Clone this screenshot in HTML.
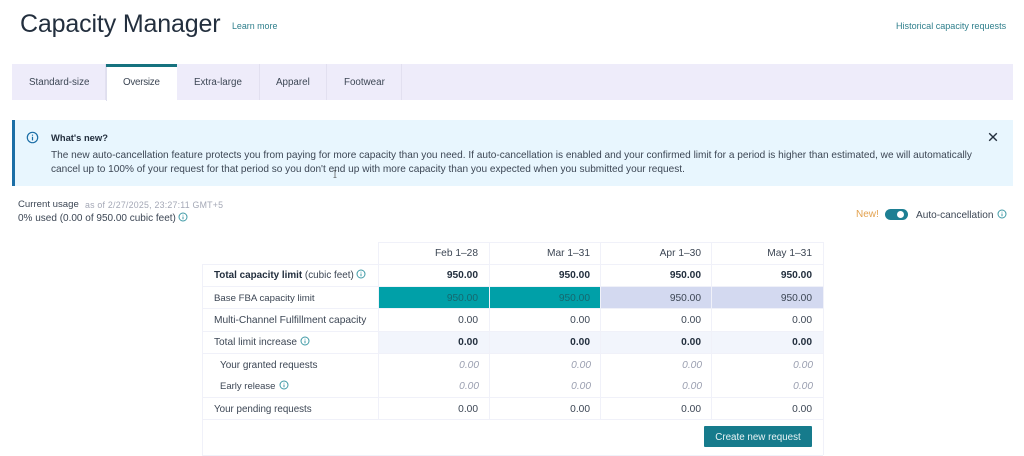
<!DOCTYPE html>
<html><head><meta charset="utf-8">
<style>
html,body{margin:0;padding:0;background:#fff;}
#p{position:relative;width:1024px;height:456px;overflow:hidden;background:#fff;font-family:"Liberation Sans",sans-serif;color:#3c4654;font-size:10.2px;}
#p div,#p svg{position:absolute;}
.t{white-space:nowrap;line-height:14px;filter:blur(.3px);}
.r{text-align:right;width:80px;}
.b{font-weight:bold;color:#232f3e;}
.i{font-style:italic;color:#9a9fb0;}
.tab{top:64px;height:36px;border-right:1px solid #e2e0f0;box-sizing:border-box;}
.tl{font-size:9.8px;}
.h{height:1px;background:#f0f1f9;left:202px;width:621px;}
.v{width:1px;background:#f0f1f9;}
</style></head><body><div id="p">

<div class="t" style="left:20px;top:9px;font-size:25px;line-height:30px;color:#232f3e;letter-spacing:-.15px;">Capacity Manager</div>
<div class="t" style="left:232px;top:19px;font-size:8.9px;color:#2f7f8c;">Learn more</div>
<div class="t" style="left:896px;top:19px;font-size:9.05px;color:#2f7f8c;">Historical capacity requests</div>

<div style="left:12px;top:64px;width:1001px;height:36px;background:#eeecfa;"></div>
<div class="tab" style="left:12px;width:94px;"></div>
<div style="left:106px;top:64px;width:71px;height:37px;background:#fff;border-left:1px solid #dfdfee;box-sizing:border-box;"></div>
<div style="left:106px;top:64px;width:71px;height:3px;background:#16727f;"></div>
<div class="tab" style="left:177px;width:83px;"></div>
<div class="tab" style="left:260px;width:67px;"></div>
<div class="tab" style="left:327px;width:75px;"></div>
<div class="t tl" style="left:29px;top:76px;">Standard-size</div>
<div class="t tl" style="left:123px;top:76px;letter-spacing:-.25px;">Oversize</div>
<div class="t tl" style="left:194px;top:76px;">Extra-large</div>
<div class="t tl" style="left:276px;top:76px;">Apparel</div>
<div class="t tl" style="left:344px;top:76px;">Footwear</div>

<div style="left:12px;top:120px;width:1001px;height:66px;background:#e8f6fe;"></div>
<div style="left:12px;top:120px;width:3px;height:66px;background:#1b6ea6;"></div>
<svg style="left:26px;top:131px" width="13" height="13" viewBox="0 0 13 13"><circle cx="6.5" cy="6.5" r="5.2" fill="none" stroke="#1b6ea6" stroke-width="1.2"/><path d="M6.5 5.800V9.400M6.500 3.600V4.700" stroke="#1b6ea6" stroke-width="1.200"/></svg>
<div class="t b" style="left:51px;top:131px;font-size:9.4px;">What's new?</div>
<div class="t" style="left:51px;top:149px;font-size:10.08px;">The new auto-cancellation feature protects you from paying for more capacity than you need. If auto-cancellation is enabled and your confirmed limit for a period is higher than estimated, we will automatically</div>
<div class="t" style="left:51px;top:163px;font-size:10.08px;">cancel up to 100% of your request for that period so you don't end up with more capacity than you expected when you submitted your request.</div>
<svg style="left:988px;top:132px" width="10" height="10" viewBox="0 0 10 10"><path d="M1.200 1.200L8.800 8.800M8.800 1.200L1.200 8.800" stroke="#232f3e" stroke-width="1.400"/></svg>
<svg style="left:333px;top:170px" width="4" height="8" viewBox="0 0 4 8"><path d="M.5.5H3.500M2 .5V7.500M.5 7.500H3.500" stroke="#333" stroke-width=".6" fill="none"/></svg>

<div class="t" style="left:18px;top:198px;font-size:9.6px;">Current usage</div>
<div class="t" style="left:85px;top:198px;font-size:8.8px;color:#a4a8b6;letter-spacing:.23px;">as of 2/27/2025, 23:27:11 GMT+5</div>
<div class="t" style="left:18px;top:212px;font-size:10px;">0% used (0.00 of 950.00 cubic feet)</div>
<svg style="left:178px;top:212px" width="10" height="10" viewBox="0 0 10 10"><circle cx="5" cy="5" r="4" fill="none" stroke="#3f9aa6"/><path d="M5 4.500V7.200M5 2.700V3.500" stroke="#3f9aa6"/></svg>

<div class="t" style="left:856px;top:208px;color:#e3a24f;font-size:10px;">New!</div>
<div style="left:885px;top:209px;width:23px;height:11px;border-radius:6px;background:#1d7f93;"></div>
<div style="left:897px;top:211px;width:7px;height:7px;border-radius:50%;background:#fff;"></div>
<div class="t" style="left:916px;top:209px;font-size:10.1px;">Auto-cancellation</div>
<svg style="left:997px;top:209px" width="10" height="10" viewBox="0 0 10 10"><circle cx="5" cy="5" r="4" fill="none" stroke="#3f9aa6"/><path d="M5 4.500V7.200M5 2.700V3.500" stroke="#3f9aa6"/></svg>

<!-- table backgrounds -->
<div style="left:378px;top:286px;width:223px;height:22px;background:#00a0a8;"></div>
<div style="left:601px;top:286px;width:222px;height:22px;background:#d3d9f0;"></div>
<div style="left:378px;top:331px;width:445px;height:22px;background:#f2f5fc;"></div>

<!-- grid -->
<div class="h" style="left:378px;width:445px;top:242px;"></div>
<div class="h" style="top:264px;"></div>
<div class="h" style="top:286px;"></div>
<div class="h" style="top:308px;"></div>
<div class="h" style="top:331px;"></div>
<div class="h" style="top:353px;"></div>
<div class="h" style="top:397px;"></div>
<div class="h" style="top:419px;"></div>
<div class="h" style="top:455px;"></div>
<div class="v" style="left:202px;top:264px;height:191px;"></div>
<div class="v" style="left:378px;top:242px;height:177px;"></div>
<div class="v" style="left:489px;top:242px;height:177px;"></div>
<div class="v" style="left:600px;top:242px;height:177px;"></div>
<div class="v" style="left:711px;top:242px;height:177px;"></div>
<div class="v" style="left:823px;top:242px;height:213px;"></div>

<!-- labels -->
<div class="t" style="left:214px;top:269px;font-size:9.9px;"><span class="b">Total capacity limit</span> (cubic feet)</div>
<svg style="left:356px;top:269px" width="10" height="10" viewBox="0 0 10 10"><circle cx="5" cy="5" r="4" fill="none" stroke="#3f9aa6"/><path d="M5 4.500V7.200M5 2.700V3.500" stroke="#3f9aa6"/></svg>
<div class="t" style="left:214px;top:292px;font-size:9.65px;">Base FBA capacity limit</div>
<div class="t" style="left:214px;top:314px;">Multi-Channel Fulfillment capacity</div>
<div class="t" style="left:214px;top:336px;font-size:10.1px;">Total limit increase</div>
<svg style="left:300px;top:336px" width="10" height="10" viewBox="0 0 10 10"><circle cx="5" cy="5" r="4" fill="none" stroke="#3f9aa6"/><path d="M5 4.500V7.200M5 2.700V3.500" stroke="#3f9aa6"/></svg>
<div class="t" style="left:220px;top:359px;font-size:9.95px;">Your granted requests</div>
<div class="t" style="left:220px;top:380px;font-size:9.5px;">Early release</div>
<svg style="left:279px;top:380px" width="10" height="10" viewBox="0 0 10 10"><circle cx="5" cy="5" r="4" fill="none" stroke="#3f9aa6"/><path d="M5 4.500V7.200M5 2.700V3.500" stroke="#3f9aa6"/></svg>
<div class="t" style="left:214px;top:403px;font-size:9.8px;">Your pending requests</div>

<!-- col 1 -->
<div class="t r" style="left:398px;top:247px;">Feb 1–28</div>
<div class="t r b" style="left:398px;top:269px;">950.00</div>
<div class="t r" style="left:398px;top:292px;color:#15686f;">950.00</div>
<div class="t r" style="left:398px;top:314px;">0.00</div>
<div class="t r b" style="left:398px;top:336px;">0.00</div>
<div class="t r i" style="left:399px;top:359px;">0.00</div>
<div class="t r i" style="left:399px;top:380px;">0.00</div>
<div class="t r" style="left:398px;top:403px;">0.00</div>
<!-- col 2 -->
<div class="t r" style="left:510px;top:247px;">Mar 1–31</div>
<div class="t r b" style="left:510px;top:269px;">950.00</div>
<div class="t r" style="left:510px;top:292px;color:#15686f;">950.00</div>
<div class="t r" style="left:510px;top:314px;">0.00</div>
<div class="t r b" style="left:510px;top:336px;">0.00</div>
<div class="t r i" style="left:511px;top:359px;">0.00</div>
<div class="t r i" style="left:511px;top:380px;">0.00</div>
<div class="t r" style="left:510px;top:403px;">0.00</div>
<!-- col 3 -->
<div class="t r" style="left:621px;top:247px;">Apr 1–30</div>
<div class="t r b" style="left:621px;top:269px;">950.00</div>
<div class="t r" style="left:621px;top:292px;">950.00</div>
<div class="t r" style="left:621px;top:314px;">0.00</div>
<div class="t r b" style="left:621px;top:336px;">0.00</div>
<div class="t r i" style="left:622px;top:359px;">0.00</div>
<div class="t r i" style="left:622px;top:380px;">0.00</div>
<div class="t r" style="left:621px;top:403px;">0.00</div>
<!-- col 4 -->
<div class="t r" style="left:732px;top:247px;">May 1–31</div>
<div class="t r b" style="left:732px;top:269px;">950.00</div>
<div class="t r" style="left:732px;top:292px;">950.00</div>
<div class="t r" style="left:732px;top:314px;">0.00</div>
<div class="t r b" style="left:732px;top:336px;">0.00</div>
<div class="t r i" style="left:733px;top:359px;">0.00</div>
<div class="t r i" style="left:733px;top:380px;">0.00</div>
<div class="t r" style="left:732px;top:403px;">0.00</div>

<div class="t" style="left:704px;top:426px;width:108px;height:21px;line-height:24px;background:#167b8c;border-radius:1px;color:#e8f3f5;text-align:center;font-size:9.8px;">Create new request</div>

</div></body></html>
